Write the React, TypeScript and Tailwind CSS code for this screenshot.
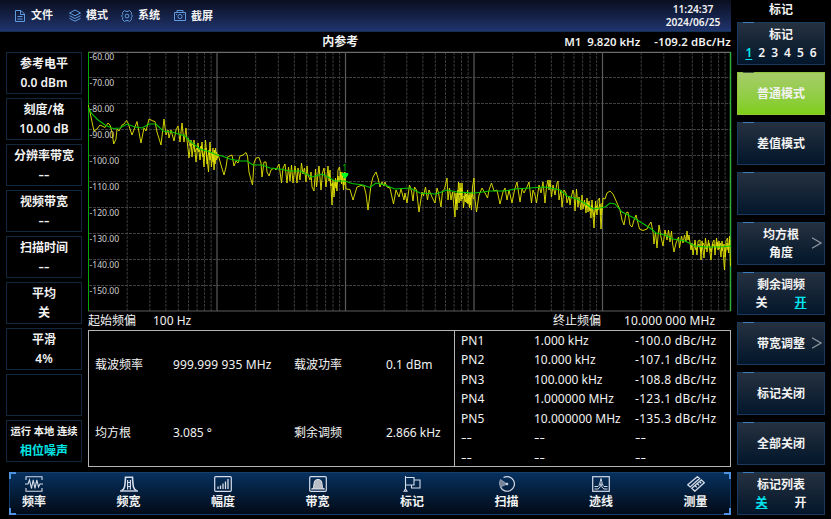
import { ReactNode } from 'react';
import clsx from 'clsx';

type Setting = {
    label: string;
    value: string;
}

const settings: Setting[] = [
    { label: '参考电平', value: '0.0 dBm' },
    { label: '刻度/格', value: '10.00 dB' },
    { label: '分辨率带宽', value: '--' },
    { label: '视频带宽', value: '--' },
    { label: '扫描时间', value: '--' },
    { label: '平均', value: '关' },
    { label: '平滑', value: '4%' },
    { label: '', value: '' },
];

const noiseRows = [
    ['PN1', '1.000 kHz', '-100.0 dBc/Hz'],
    ['PN2', '10.000 kHz', '-107.1 dBc/Hz'],
    ['PN3', '100.000 kHz', '-108.8 dBc/Hz'],
    ['PN4', '1.000000 MHz', '-123.1 dBc/Hz'],
    ['PN5', '10.000000 MHz', '-135.3 dBc/Hz'],
    ['--', '--', '--'],
    ['--', '--', '--'],
];

const rawTrace = `88,105 90,112 92,122 94,131 97,129 100,125 105,127.500 108,123 110,125 112,132 113.700,144 116,139 117,129 119,131 122,125 124,124 126.500,120.500 128,123 132,135 137,121.500 141,143 144,128 146,131 149,119 153,121 155,121.500 157,132 161,145 164,119 166,135 168,130 169,138 171,130 174,141 176,130 178,126 180,142 182,123 184,142 186,128 187,140 189,158 191,140 192,157 194,140 196,162 198,143 200,160 202,142 204,167 205.500,140 207,158 208.500,172 210,142 211.500,167 213,148 214,170 215.500,148 216.500,160 218,154
221,165 224,175 226,167 227.500,157 232,155 234,166 236,161 238,163 240,156 243,155 246,152.500 247.500,156 249,172 250.500,178 252.500,185 254,163 256,158 259,157.500 261,163 262,177 264,162 266,162 267,172 269,176 271,170 274,168 276,170 279,164 281.500,183 283,168 285,164 287,183 288.500,167 290,181 291.500,165 293,183 295,166 297,183 298,168 300,180 301.500,163 303,174 304.500,168 306,182 307,166 308,175 310,180 311,172 312,187 314,191 315.500,169 316.500,187 319,166 321,190 322.500,173 324,168 326,187 328,166 329,181 330,170 332,205 333,180 334,197 335.500,178 337,191 338,170 339.500,167 341,180 342,171 343.500,190 344.500,168 345.500,182 346,189
350,189.500 353,200 357,187 361,185.500 364,186 366,194 368,210 371,185 373,177 376,172 378,178 380,187 382,182 384,186 385,182 387,187 390,188 391.500,195 393.500,204 396,190 399,197 401,189 404,200 405,193 407,203 409.500,185 411.500,191 413,201 414.500,187 416.500,190 419,212 422,192 423.500,196 425.500,187 427.500,200 429,190 432,197 435,203 437,188 438.500,193 441,207 442.500,191 444.500,189 447,178 448,200 449.500,188 451,200 452.500,192 455,217 456,193 457,210 458.500,182 459.500,195 460,183 461,201 462,183 463.500,208 465,193 467,203 467.500,190 469.500,208 470,193 471.500,210 472.500,187 474,178 475,200 476.500,212 479,195 482,188 485,193 487.500,198 489,190 491.500,183 494,191 497,190 500,204 503,192 505,188 507,200 509,190 512,203 514.500,190 517,182 520,202 522,189 524,193 527,187 529,182 531.500,203 533,190 535,195 536.500,203 539,185 541,193 543,182 545,203 546.500,187 548,180 549,190
550,180 551.500,197 553,185 555,195 557,183 558,181 559,200 561,190 562,207 564,190 566,193 567,203 569,196 570,205 571,198 573,190 574,194 575,211 576.500,189 578,207 579,197 581,210 582,195 583,209 584.500,200 586,213 587,198 588,212 589,201 591,218 592,200 593,216 594,228 595.500,201 597,215 598,200 599.500,198 601,229 602,212 602.500,207 603,198 605,199 607,193 610,191 613,194 617,203 620,210 622,220 624,225 626,213 628,212 630,225 632,227 634,220 636,215 638,223 639.500,229 643,230.500 647,229 649,225 651,222 653,232 654,244 655.500,232 657,248 659,225 661,237 663,246 665,230 667,240 668.500,230 670,242 671.500,231 672.500,243 674,252 676,243 678.500,237 679.500,248 681.500,236 683,243 684.500,235 686,242 687,231 688,240 689,235 691,250 692,243 693,255 695,240 697,255 698,241 700,240 701,260 702,241 704,258 705.500,238 707,252 708.500,240 710,253 711,260 712.500,243 714,240 715,255 716.500,238 718,250 719,241 721,257 722,241 723,250 724.500,270 726,241 727.500,238 728.500,253 729.500,236 730.500,266`;

// samples bunch up at the end of each decade
const denseTraces = [
    '188,138 190,146 193,144 195,152 197,148 199,152 201,146 203,157 206,148 207,164 209,150 210,160 212,152 213,162 214.500,150 215,164 216.500,152 217.500,158',
    '329,174 331,186 332.500,183 333.500,190 335,182 336,188 338,176 339,182 340.500,172 341.500,184 342.500,176 344,185 345,174',
    '454,192 456,204 458,190 459,203 461,188 462,199 464,196 465.500,202 466.500,194 468,204 469,195 470.500,205 472,192 473.500,199',
    '584,203 586,208 588,203 590,211 592,205 594,217 596,206 598,210 600,204 601,215 602,203',
    '694,244 696,250 699,244 701,252 703,243 706,249 709,243 711,252 713,244 715.500,249 717,242 719,249 720.500,243 722,251 724,244 725,257 727,243 728,250 730,240',
];

const smoothTrace = `88,107 92,114 98,120 105,125 113,128.500 120,128 127,124 135,127 142,128 149,124 156,124 163,131 172,132 185,136 191,142 200,149 210,152 217,155 222,156 230,159 240,161 247,161 253,165 262,165 270,168 280,169 290,171 300,171 312,177 322,174 328,177 335,181 345,181 352,183.500 363,185 370,187.500 376,183 385,185 395,189 410,188 420,193 436,194 447,190 457,192 475,193 490,191 505,191 515,189 530,188 545,187 550,188 560,190 567,196 577,199 586,204 593,209 600,208 605,207 610,203 615,204 622,212 634,218 642,223 650,228 656,233 665,235 673,239 685,241 695,246 705,247 720,247 731,246`;

const CHART_LEFT = 88.5;
const DECADE = 128.5;

const minorLines = [0, 1, 2, 3, 4].flatMap(d =>
    [2, 3, 4, 5, 6, 7, 8, 9].map(n => CHART_LEFT + (d + Math.log10(n)) * DECADE)
);

const Chart = () => (
    <svg
        viewBox="88 50 644 263"
        className="block h-[263px] w-[644px] shrink-0 font-['Noto_Sans',sans-serif] font-normal"
    >
        <g stroke="#404040" strokeDasharray="3 1">
            {minorLines.map(x => <path key={x} d={`M${x} 52V311`} strokeWidth=".9" />)}
            {[1, 2, 3, 4, 5, 6, 7, 8, 9].map(n => (
                <path key={n} d={`M89 ${51.5 + n * 26}H731`} />
            ))}
        </g>
        <g stroke="#5c5c5c" strokeWidth="1.200">
            <path d="M88 52.300H731" stroke="#6c6c6c" />
            <path d="M88 311H731" />
            {[1, 2, 3, 4].map(n => <path key={n} d={`M${CHART_LEFT + n * DECADE} 52V311`} />)}
        </g>
        <g fill="#d0d0d0" fontSize="8.600">
            {[...Array(10)].map((_, n) => (
                <text key={n} x="89.500" y={60.3 + n * 26}>{`-${60 + n * 10}.00`}</text>
            ))}
        </g>
        <path d="M730.500 52V311" stroke="#2fae3c" strokeWidth="1.500" />
        <path d="M88.500 52V311" stroke="#00a800" />
        <polyline points={rawTrace} fill="none" stroke="#dcdc00" strokeWidth=".95" />
        {denseTraces.map(points => (
            <polyline key={points} points={points} fill="none" stroke="#e8e800" strokeWidth=".9" />
        ))}
        <polyline points={smoothTrace} fill="none" stroke="#00c800" strokeWidth="1.100" />
        <path d="M341 163H349V172H341Z" fill="#000" />
        <text x="342.300" y="170.800" fontSize="9" fill="#00c000">1</text>
        <path d="M341.800 173H348.200V175L345 179L341.800 175Z" fill="#00ff20" />
    </svg>
)

const Icon = ({ children, className }: { children: ReactNode; className?: string }) => (
    <svg
        viewBox="0 0 18 16"
        className={clsx("h-4 w-[18px]", className)}
        fill="none"
        stroke="currentColor"
    >
        {children}
    </svg>
)

const topMenu = [
    {
        label: '文件',
        className: 'w-[55px]',
        icon: <path d="M4.500 2.500H10L13.500 6V13.500H4.500ZM9.500 2.500V6.500H13.500M6.500 8.500H11.500M6.500 11H11.500" />,
    },
    {
        label: '模式',
        className: 'w-[52px]',
        icon: <path d="M9 2 14.500 5 9 7.800 3.500 5ZM3.500 7.700 9 10.500 14.500 7.700M3.500 10.300 9 13.200 14.500 10.300" />,
    },
    {
        label: '系统',
        className: 'w-[53px]',
        icon: (
            <>
                <path d="M6.500 2.500 8 3.400H10L11.500 2.500 13.500 4.500 13.200 6.500 14.600 8 13.200 9.500 13.500 11.500 11.500 13.500 10 12.600H8L6.500 13.500 4.500 11.500 4.800 9.500 3.400 8 4.800 6.500 4.500 4.500Z" />
                <circle cx="9" cy="8" r="1.900" />
            </>
        ),
    },
    {
        label: '截屏',
        className: 'w-[53px] pt-px',
        icon: (
            <>
                <path d="M3.500 4.500H14.500V12.500H3.500ZM6 4.500V2.500H12V4.500" />
                <circle cx="9" cy="8.500" r="2.100" />
                <path d="M5 6.500H6M12.500 6.500H13.200" />
            </>
        ),
    },
];

const bottomMenu = [
    {
        label: '频率',
        icon: <path d="M1 4V.8H17V4M1 12V15.200H17V12M0 8H3L4.500 4 6.500 12.500 8.200 3.800 10 12.500 11.800 3.800 13.500 11 15 8H18" strokeWidth="1.100" />,
    },
    {
        label: '频宽',
        icon: (
            <>
                <path d="M1.500 14.500C4.500 14 5 11 5.500 1.200H12.500C13 11 13.500 14 16.500 14.500" strokeWidth="1.600" />
                <path d="M0 15H18" strokeWidth="1.400" />
                <path d="M7.600 4V13.500M10.400 4V13.500M7.600 6.500H10.400M7.600 10.500H10.400" strokeWidth="1.200" />
            </>
        ),
    },
    {
        label: '幅度',
        icon: (
            <>
                <rect x=".7" y=".7" width="16.600" height="14.600" rx="1" strokeWidth="1.200" />
                <path d="M4 10.500V13M6.500 9.500V13M9 7.500V13M11.500 5.500V13M14 3V13" strokeWidth="1.300" />
            </>
        ),
    },
    {
        label: '带宽',
        icon: (
            <>
                <rect x=".7" y=".7" width="16.600" height="14.600" rx="1" strokeWidth="1.200" />
                <path d="M2.500 13C5 13 4.500 10 5.200 6.500 5.800 4 7 3.500 9 3.500S12.200 4 12.800 6.500C13.500 10 13 13 15.500 13Z" fill="#b9bdc6" stroke="#dfe4ee" />
            </>
        ),
    },
    {
        label: '标记',
        icon: <path d="M2.500 0V13M2.500 1.500H11V9H2.500M11 4H17V12H8.500V9M1 15.300 2.500 13 4 15.300Z" strokeWidth="1.100" />,
    },
    {
        label: '扫描',
        icon: (
            <>
                <path d="M5.500 1.600A7.300 7.300 0 1 1 2.500 11" strokeWidth="1.200" />
                <path d="M9 8 2.500 3.500C1 6 1.200 8.500 2.500 11Z" fill="#778399" stroke="#aab4c5" strokeWidth=".7" />
                <circle cx="9" cy="8" r=".9" fill="currentColor" />
            </>
        ),
    },
    {
        label: '迹线',
        icon: (
            <>
                <rect x=".7" y=".7" width="16.600" height="14.600" strokeWidth="1.200" />
                <path d="M2.500 10.500H6C7.500 9.500 8 7 9 2.500 10 7 10.500 9.500 12 10.500H15.500M2.500 13H6C8 12 8.500 10 9 7.500 9.500 10 10 12 12 13H15.500" />
            </>
        ),
    },
    {
        label: '测量',
        icon: (
            <path d="M.8 8.800 10.300.7 12.600 2.500 3.200 10.900ZM4.800 12.300 14.300 3.800 17.300 6.700 7.800 15.200ZM8.200 9.700 9.800 11.400M10.500 7.700 12.100 9.400M12.700 5.700 14.300 7.400" strokeWidth="1.300" />
        ),
    },
];

// placeholder dashes are drawn a little wider than the font's hyphens
const Value = ({ children }: { children: string }) => (
    <span className={clsx(children === '--' && "inline-block scale-x-140", children.startsWith('-') && "origin-left", children.startsWith('-1') && "tracking-[.3px]")}>
        {children}
    </span>
)

const SoftKey = ({
    children,
    active,
    arrow
}: {
    children?: ReactNode;
    active?: boolean;
    arrow?: boolean;
}) => (
    <div
        className={clsx(
            "relative flex h-[43px] w-[88px] flex-col items-center justify-center border text-center leading-[18px]",
            active
                ? "border-[#8fc63a] bg-linear-to-b from-[#a6cc68] to-[#7fce12]"
                : "border-[#183a5c] bg-linear-to-b from-[#26313f] to-[#03162b]"
        )}
    >
        <div className={clsx("absolute -top-px left-[5px] h-px w-[11px]", active ? "bg-[#46583a]" : "bg-[#3e7cbd]")} />
        {children}
        {arrow && (
            <svg viewBox="0 0 10 12" className="absolute top-[14px] right-[2px] h-3 w-[10px]" fill="none" stroke="#8b939d" strokeWidth="1.300">
                <path d="M0 .8 9 6 0 11.200" />
            </svg>
        )}
    </div>
)

const Toggle = ({ on }: { on: boolean }) => (
    <div className="flex w-[51px] justify-between">
        <span className={clsx(!on && "text-[#00e5ee] underline underline-offset-1")}>关</span>
        <span className={clsx(on && "text-[#00e5ee] underline underline-offset-1")}>开</span>
    </div>
)

const App = () => {
    return (
        <div className="flex h-[519px] w-[831px] overflow-hidden bg-black font-['Noto_Sans','Noto_Sans_CJK_SC',sans-serif] text-[12px] font-semibold whitespace-nowrap text-[#f2f2f2]">
            <div className="flex w-[731px] flex-col">
                <header className="flex h-8 items-center justify-between border-b border-[#14304f] bg-linear-to-b from-[#0a0f20] to-[#20346f]">
                    <div className="flex pl-[11px] text-[11px]">
                        {topMenu.map(item => (
                            <div key={item.label} className={clsx("flex items-center gap-[2px]", item.className)}>
                                <Icon className="shrink-0 text-[#5f9be0]">{item.icon}</Icon>
                                <span>{item.label}</span>
                            </div>
                        ))}
                    </div>
                    <div className="w-[76px] text-center text-[10.2px] leading-[13px]">
                        <div>11:24:37</div>
                        <div>2024/06/25</div>
                    </div>
                </header>

                <div className="flex h-[435px]">
                    <aside className="flex w-[88px] flex-col gap-1 pt-5 pl-[6px] text-center leading-[19px]">
                        {settings.map((item, i) => (
                            <div key={i} className="flex h-[42px] w-[76px] flex-col justify-center border border-[#10283f]">
                                <div>{item.label}</div>
                                <div className={clsx(item.value === '--' && "scale-x-140")}>{item.value}</div>
                            </div>
                        ))}
                        <div className="flex h-[42px] w-[76px] flex-col items-center justify-center border border-[#10283f]">
                            <div className="text-[10.3px]">运行 本地 连续</div>
                            <div className="text-[#00e5e5]">相位噪声</div>
                        </div>
                    </aside>

                    <main className="flex w-[643px] flex-col">
                        <div className="flex h-[18px] items-center justify-end pt-px text-[11.4px]">
                            <span className="mr-[206px] text-[12px]">内参考</span>
                            <span className="mr-[14px]">M1&nbsp; 9.820 kHz</span>
                            <span className="tracking-[.15px]">-109.2 dBc/Hz</span>
                        </div>
                        <Chart />
                        <div className="-mt-px flex h-[17px] items-center font-normal">
                            <span className="w-[65px]">起始频偏</span>
                            <span className="w-[400px]">100 Hz</span>
                            <span className="w-[71px]">终止频偏</span>
                            <span className="tracking-[.1px]">10.000 000 MHz</span>
                        </div>
                        <div className="mt-px flex h-[137px] border border-[#b5b5b5] font-normal">
                            <div className="grid w-[366px] grid-cols-[78px_121px_92px_1fr] grid-rows-[67px_70px] items-center border-r border-[#b5b5b5] pl-[6px]">
                                <span>载波频率</span>
                                <span className="tracking-[.13px]">999.999 935 MHz</span>
                                <span>载波功率</span>
                                <span>0.1 dBm</span>
                                <span>均方根</span>
                                <span>3.085 °</span>
                                <span>剩余调频</span>
                                <span>2.866 kHz</span>
                            </div>
                            <div className="-mt-[.5px] flex-1 pl-[6px] leading-[19.5px]">
                                {noiseRows.map((row, i) => (
                                    <div key={i} className="grid grid-cols-[73px_101px_1fr]">
                                        {row.map((cell, j) => <div key={j}><Value>{cell}</Value></div>)}
                                    </div>
                                ))}
                            </div>
                        </div>
                    </main>
                </div>

                <nav className="relative mt-[5px] ml-[9px] flex h-[43px] w-[722px] border border-[#163e6c] bg-linear-to-b from-[#07315f] to-[#020b18]">
                    <i className="absolute -top-px -left-px size-[7px] border-t-2 border-l-2 border-[#4e93e0]" />
                    <i className="absolute -top-px -right-px size-[7px] border-t-2 border-r-2 border-[#4e93e0]" />
                    <i className="absolute -bottom-px -left-px size-[7px] border-b-2 border-l-2 border-[#4e93e0]" />
                    <i className="absolute -right-px -bottom-px size-[7px] border-r-2 border-b-2 border-[#4e93e0]" />
                    {bottomMenu.map(item => (
                        <div key={item.label} className="mr-[46.5px] flex w-12 shrink-0 flex-col items-center pt-[3px] leading-[19px] last:mr-0">
                            <Icon className="text-[#d5dcea]">{item.icon}</Icon>
                            <span>{item.label}</span>
                        </div>
                    ))}
                </nav>
            </div>

            <aside className="flex flex-col gap-[7px] pl-[6px]">
                <div className="-mb-[7px] h-[22px] pt-px text-center leading-[17px]">标记</div>
                <SoftKey>
                    <div>标记</div>
                    <div className="flex gap-[6px]">
                        <span className="text-[#00e5ee] underline underline-offset-2">1</span>
                        {[2, 3, 4, 5, 6].map(n => <span key={n}>{n}</span>)}
                    </div>
                </SoftKey>
                <SoftKey active>普通模式</SoftKey>
                <SoftKey>差值模式</SoftKey>
                <SoftKey />
                <SoftKey arrow>
                    <div>均方根</div>
                    <div>角度</div>
                </SoftKey>
                <SoftKey>
                    <div>剩余调频</div>
                    <Toggle on />
                </SoftKey>
                <SoftKey arrow>带宽调整</SoftKey>
                <SoftKey>标记关闭</SoftKey>
                <SoftKey>全部关闭</SoftKey>
                <SoftKey>
                    <div>标记列表</div>
                    <Toggle on={false} />
                </SoftKey>
            </aside>
        </div>
    )
}

export default App;
